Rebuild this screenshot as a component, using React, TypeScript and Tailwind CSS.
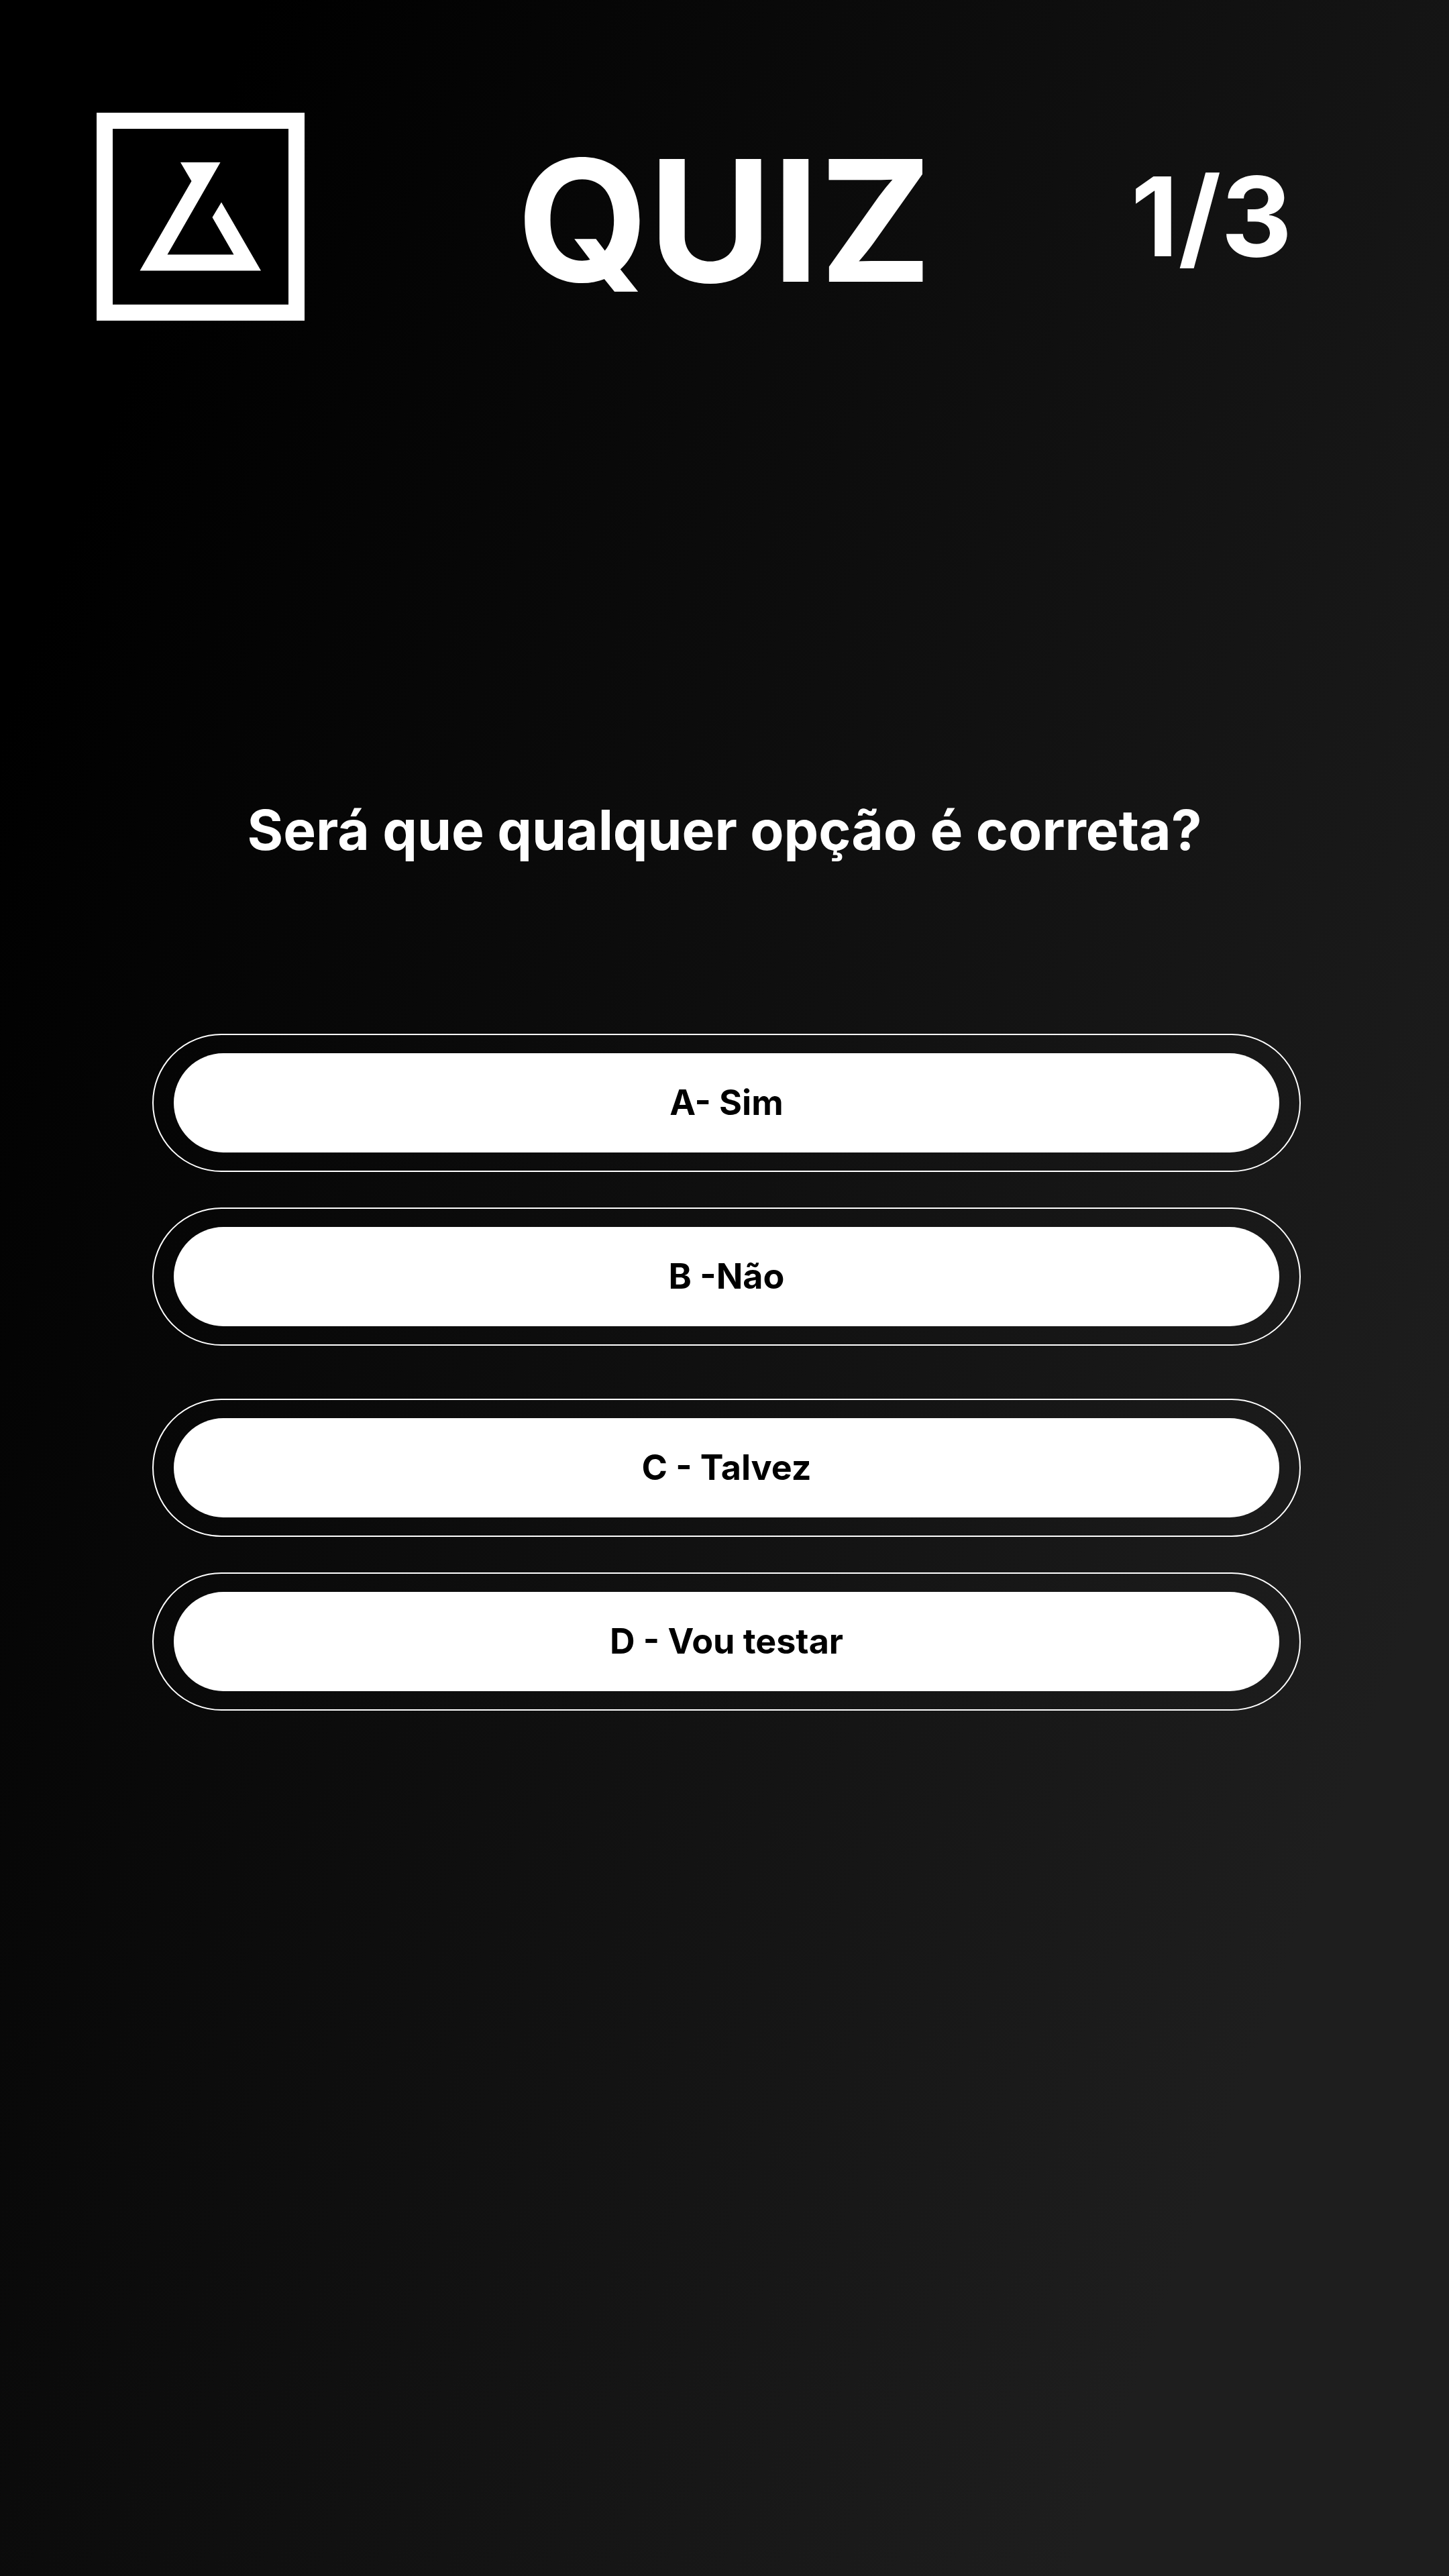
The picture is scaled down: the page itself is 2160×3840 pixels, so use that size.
const answers = [
  ["A- Sim", "B -Não"],
  ["C - Talvez", "D - Vou testar"],
];

function Logo() {
  return (
    <svg viewBox="0 0 310 310" className="size-[310px] shrink-0" role="img" aria-label="Logo">
      <rect width="310" height="310" fill="#fff" />
      <rect x="24" y="24" width="262" height="262" fill="#000" />
      <path
        fill="#fff"
        d="M125 74H184.500L105.500 211.500H204.500L172.500 156L186 133.500L245 235.500H64.500L141.500 102Z"
      />
    </svg>
  );
}

function Answer({ label }: { label: string }) {
  return (
    <button type="button" className="w-full rounded-full border-2 border-white px-[30px] py-[27px]">
      <span className="flex h-[148px] items-center justify-center rounded-full bg-white text-[52px] leading-[64px] font-bold text-black">
        {label}
      </span>
    </button>
  );
}

export default function App() {
  return (
    <div className="min-h-screen bg-[linear-gradient(109.6deg,#000_11%,#1e1e1e_84%)] font-['Inter',sans-serif] text-white">
      <header className="grid grid-cols-[1fr_auto_1fr] items-center px-[144px] pt-[168px]">
        <Logo />
        <h1 className="pt-3 text-[252px] leading-[298px] font-bold">QUIZ</h1>
        <p className="justify-self-end pr-[90px] text-[164px] leading-[200px] font-bold">1/3</p>
      </header>
      <main>
        <h2 className="mt-[710px] text-center text-[82px] leading-[100px] font-bold">
          Será que qualquer opção é correta?
        </h2>
        <div className="mt-[253px] flex flex-col gap-[79px] pr-[221px] pl-[227px]">
          {answers.map((pair) => (
            <div key={pair[0]} className="flex flex-col gap-[53px]">
              {pair.map((label) => (
                <Answer key={label} label={label} />
              ))}
            </div>
          ))}
        </div>
      </main>
    </div>
  );
}
